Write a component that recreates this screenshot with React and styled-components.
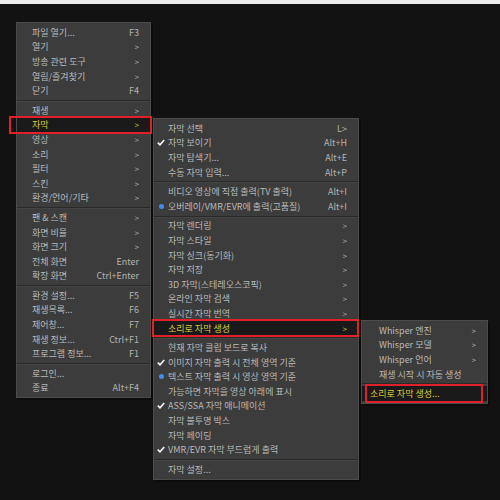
import React from 'react';
import styled, { createGlobalStyle } from 'styled-components';

const GlobalStyle = createGlobalStyle`
  html, body {
    margin: 0;
    padding: 0;
    background: #121212;
  }
  * {
    box-sizing: border-box;
  }
`;

const Desktop = styled.div`
  position: relative;
  width: 500px;
  height: 500px;
  overflow: hidden;
  background: #121212;
  border-top: 4px solid #ececec;
  font-family: 'Noto Sans CJK KR', 'Noto Sans', sans-serif;
  font-size: 9px;
  color: #b9b9b9;
`;

/* popup menus sit over the player, so they get their own window position */
const Menu = styled.ul`
  position: absolute;
  left: ${(p) => p.$left}px;
  top: ${(p) => p.$top}px;
  width: ${(p) => p.$width}px;
  margin: 0;
  padding: 2px 0;
  list-style: none;
  background: #3c3c3c;
  border: 1px solid #4b4b4b;
  box-shadow: 2px 2px 0 #0c0c0c;
`;

const Row = styled.li`
  position: relative;
  display: grid;
  grid-template-columns: ${(p) => p.$gutter}px 1fr auto;
  align-items: center;
  height: 14.6px;
  padding-right: 11px;
  white-space: nowrap;
  background: ${(p) => (p.$active ? '#1a1a1a' : 'transparent')};
  color: ${(p) => (p.$active ? '#dcca3a' : '#b9b9b9')};

  &::after {
    content: '';
    display: ${(p) => (p.$marked ? 'block' : 'none')};
    position: absolute;
    left: ${(p) => p.$markLeft || -2}px;
    right: ${(p) => p.$markRight || -2}px;
    top: -2px;
    bottom: -2px;
    border: 2.5px solid #e0202a;
    pointer-events: none;
  }
`;

const Mark = styled.span`
  display: flex;
  justify-content: center;
  align-items: center;
`;

const Dot = styled.span`
  width: 5px;
  height: 5px;
  border-radius: 50%;
  background: #3d8ef0;
`;

const Label = styled.span`
  margin-left: ${(p) => p.$shift || 0}px;
`;

const Shortcut = styled.span`
  padding-left: 12px;
  color: ${(p) => (p.$active ? '#dcca3a' : '#b3b3b3')};
  font-size: ${(p) => (p.$arrow ? '8px' : '9px')};
`;

const Separator = styled.li`
  height: 5px;
  display: flex;
  align-items: center;

  &::before {
    content: '';
    flex: 1;
    height: 1px;
    background: #2a2a2a;
    box-shadow: 0 1px 0 #444;
  }
`;

const CheckIcon = () => (
  <svg width="8" height="7" viewBox="0 0 8 7">
    <path d="M0.8 3.6 L3 5.8 L7.2 1" fill="none" stroke="#f2f2f2" strokeWidth="1.7" />
  </svg>
);

const mainMenu = [
  ['파일 열기...', 'F3'],
  ['열기', '>'],
  ['방송 관련 도구', '>'],
  ['열림/즐겨찾기', '>'],
  ['닫기', 'F4'],
  '-',
  ['재생', '>'],
  ['자막', '>', { active: true, marked: true, markLeft: -8, markRight: -2 }],
  ['영상', '>'],
  ['소리', '>'],
  ['필터', '>'],
  ['스킨', '>'],
  ['환경/언어/기타', '>'],
  '-',
  ['팬 & 스캔', '>'],
  ['화면 비율', '>'],
  ['화면 크기', '>'],
  ['전체 화면', 'Enter'],
  ['확장 화면', 'Ctrl+Enter'],
  '-',
  ['환경 설정...', 'F5'],
  ['재생목록...', 'F6'],
  ['제어창...', 'F7'],
  ['재생 정보...', 'Ctrl+F1'],
  ['프로그램 정보...', 'F1'],
  '-',
  ['로그인...', ''],
  ['종료', 'Alt+F4'],
];

const subMenu = [
  ['자막 선택', 'L>'],
  ['자막 보이기', 'Alt+H', { mark: 'check' }],
  ['자막 탐색기...', 'Alt+E'],
  ['수동 자막 입력...', 'Alt+P'],
  '-',
  ['비디오 영상에 직접 출력(TV 출력)', 'Alt+I'],
  ['오버레이/VMR/EVR에 출력(고품질)', 'Alt+I', { mark: 'dot' }],
  '-',
  ['자막 렌더링', '>'],
  ['자막 스타일', '>'],
  ['자막 싱크(동기화)', '>'],
  ['자막 저장', '>'],
  ['3D 자막(스테레오스코픽)', '>'],
  ['온라인 자막 검색', '>'],
  ['실시간 자막 번역', '>'],
  ['소리로 자막 생성', '>', { active: true, marked: true, markLeft: -2, markRight: -1 }],
  '-',
  ['현재 자막 클립 보드로 복사', ''],
  ['이미지 자막 출력 시 전체 영역 기준', '', { mark: 'check' }],
  ['텍스트 자막 출력 시 영상 영역 기준', '', { mark: 'dot' }],
  ['가능하면 자막을 영상 아래에 표시', ''],
  ['ASS/SSA 자막 애니메이션', '', { mark: 'check' }],
  ['자막 불투명 박스', ''],
  ['자막 페이딩', ''],
  ['VMR/EVR 자막 부드럽게 출력', '', { mark: 'check' }],
  '-',
  ['자막 설정...', ''],
];

const whisperMenu = [
  ['Whisper 엔진', '>'],
  ['Whisper 모델', '>'],
  ['Whisper 언어', '>'],
  ['재생 시작 시 자동 생성', ''],
  '-',
  ['소리로 자막 생성...', '', { active: true, marked: true, shift: -9, markLeft: 3, markRight: 4 }],
];

const MenuList = ({ items, left, top, width, gutter }) => (
  <Menu $left={left} $top={top} $width={width}>
    {items.map((item, i) => {
      if (item === '-') return <Separator key={i} />;
      const [label, right, opts = {}] = item;
      return (
        <Row
          key={i}
          $gutter={gutter}
          $active={opts.active}
          $marked={opts.marked}
          $markLeft={opts.markLeft}
          $markRight={opts.markRight}
        >
          <Mark>
            {opts.mark === 'check' && <CheckIcon />}
            {opts.mark === 'dot' && <Dot />}
          </Mark>
          <Label $shift={opts.shift}>{label}</Label>
          <Shortcut $arrow={right === '>'} $active={opts.active}>
            {right}
          </Shortcut>
        </Row>
      );
    })}
  </Menu>
);

const App = () => (
  <>
    <GlobalStyle />
    <Desktop>
      <MenuList items={mainMenu} left={16} top={18} width={135} gutter={15} />
      <MenuList items={subMenu} left={153} top={114} width={206} gutter={14} />
      <MenuList items={whisperMenu} left={361} top={316} width={127} gutter={17} />
    </Desktop>
  </>
);

export default App;
